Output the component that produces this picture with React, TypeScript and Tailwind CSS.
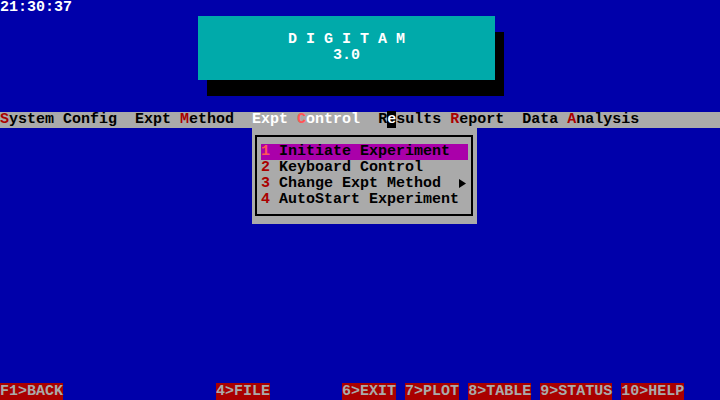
import React from "react";

const R = "text-[#AA0000]";

function FKey({ label }: { label: string }) {
  return <span className="bg-[#AA0000] text-[#AAAAAA]">{label}</span>;
}

export default function App() {
  return (
    <div className="relative w-[720px] h-[400px] overflow-hidden bg-[#0000AA] flex flex-col font-['Liberation_Mono',monospace] font-bold text-[15px] leading-[16px] whitespace-pre">
      {/* clock row */}
      <div className="h-[16px] text-white">21:30:37</div>

      {/* title box */}
      <div className="ml-[198px] w-[297px] h-[64px] bg-[#00AAAA] shadow-[9px_16px_0_0_#000000] flex flex-col items-center pt-[16px] text-white">
        <div className="h-[16px]">D I G I T A M</div>
        <div className="h-[16px]">3.0</div>
      </div>

      <div className="h-[32px]" />

      {/* menu bar */}
      <div className="h-[16px] bg-[#AAAAAA] text-black">
        <span className={R}>S</span>ystem Config  Expt <span className={R}>M</span>ethod  <span className="text-white">Expt <span className="text-[#FF5555]">C</span>ontrol</span>  R<span className="bg-black text-white">e</span>sults <span className={R}>R</span>eport  Data <span className={R}>A</span>nalysis
      </div>

      <div className="flex-1" />

      {/* function keys */}
      <div className="h-[16px]">
        <FKey label="F1>BACK" />
        {"                 "}
        <FKey label="4>FILE" />
        {"        "}
        <FKey label="6>EXIT" />
        {" "}
        <FKey label="7>PLOT" />
        {" "}
        <FKey label="8>TABLE" />
        {" "}
        <FKey label="9>STATUS" />
        {" "}
        <FKey label="10>HELP" />
      </div>

      {/* dropdown menu */}
      <div className="absolute left-[252px] top-[128px] w-[225px] h-[96px] bg-[#AAAAAA] text-black">
        <div className="absolute left-[3px] top-[7px] w-[218px] h-[81px] border-2 border-black" />
        <div className="relative pt-[16px] pl-[9px] flex flex-col">
          <div className="w-[207px] h-[16px] bg-[#AA00AA]">
            <span className="text-[#FF5555]">1</span> Initiate Experiment
          </div>
          <div className="w-[207px] h-[16px]">
            <span className={R}>2</span> Keyboard Control
          </div>
          <div className="w-[207px] h-[16px] flex">
            <span>
              <span className={R}>3</span> Change Expt Method
            </span>
            <span className="flex-1" />
            <svg width="9" height="16" viewBox="0 0 9 16" className="block">
              <path d="M0 3 L7 7.5 L0 12 Z" fill="#000" />
            </svg>
          </div>
          <div className="w-[207px] h-[16px]">
            <span className={R}>4</span> AutoStart Experiment
          </div>
        </div>
      </div>
    </div>
  );
}
